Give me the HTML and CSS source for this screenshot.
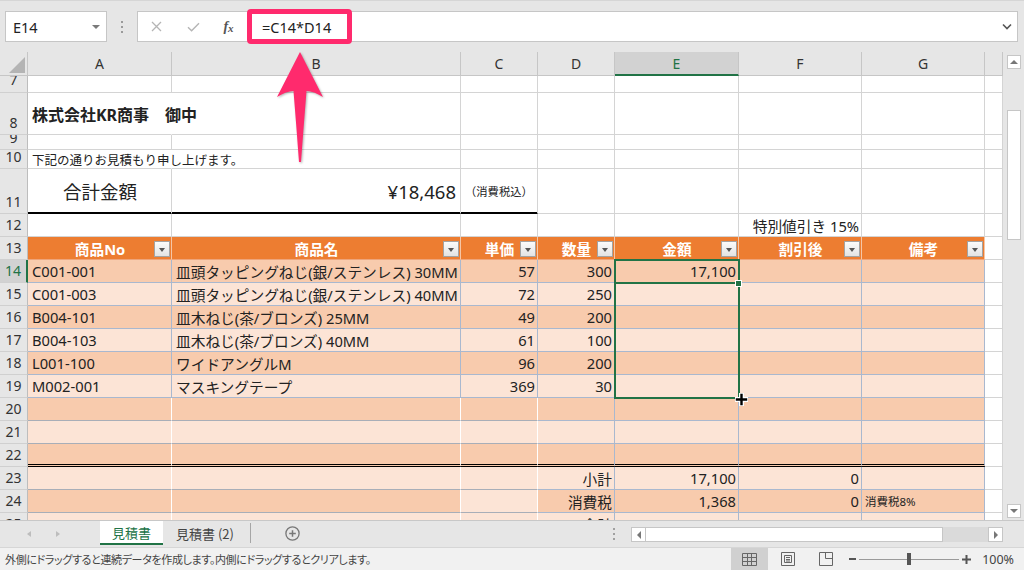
FILE: index.html
```html
<!DOCTYPE html>
<html lang="ja">
<head>
<meta charset="utf-8">
<title>見積書 - Excel</title>
<link rel="stylesheet" href="styles.css">
</head>
<body>
<div class="fbar">
  <div class="namebox"><span>E14</span><i class="tri"></i></div>
  <div class="vdots"><i></i><i></i><i></i></div>
  <div class="fbox">
    <span class="fbtn"><svg width="11" height="11" viewBox="0 0 11 11"><path d="M1 1L10 10M10 1L1 10" stroke="#b5b5b5" stroke-width="1.3" fill="none"/></svg></span>
    <span class="fbtn"><svg width="13" height="10" viewBox="0 0 13 10"><path d="M1 5.2L4.6 8.8L12 1.2" stroke="#b5b5b5" stroke-width="1.4" fill="none"/></svg></span>
    <span class="fbtn fx">f<span>x</span></span>
    <span class="ftext">=C14*D14</span>
    <span class="fchev"><svg width="10" height="7" viewBox="0 0 10 7"><path d="M1 1.5L5 5.5L9 1.5" stroke="#555" stroke-width="1.6" fill="none"/></svg></span>
  </div>
</div>

<div class="main">
  <div class="grid">
    <div class="row colhead">
      <div class="corner"><svg width="28" height="24" viewBox="0 0 28 24"><path d="M25 5V21H9Z" fill="#b4b4b4"/></svg></div>
      <div class="ch">A</div><div class="ch">B</div><div class="ch">C</div><div class="ch">D</div>
      <div class="ch act">E</div><div class="ch">F</div><div class="ch">G</div><div class="ch"></div>
    </div>

    <div class="row w h17 r7">
      <div class="rh"><span>7</span></div>
      <div class="c"></div><div class="c"></div><div class="c"></div><div class="c"></div><div class="c"></div><div class="c"></div><div class="c"></div><div class="c"></div>
    </div>
    <div class="row w h42">
      <div class="rh"><span>8</span></div>
      <div class="c ov title">株式会社KR商事　御中</div><div class="c"></div><div class="c"></div><div class="c"></div><div class="c"></div><div class="c"></div><div class="c"></div><div class="c"></div>
    </div>
    <div class="row w h15">
      <div class="rh"><span>9</span></div>
      <div class="c"></div><div class="c"></div><div class="c"></div><div class="c"></div><div class="c"></div><div class="c"></div><div class="c"></div><div class="c"></div>
    </div>
    <div class="row w h19">
      <div class="rh"><span>10</span></div>
      <div class="c ov note">下記の通りお見積もり申し上げます。</div><div class="c"></div><div class="c"></div><div class="c"></div><div class="c"></div><div class="c"></div><div class="c"></div><div class="c"></div>
    </div>
    <div class="row w h45">
      <div class="rh"><span>11</span></div>
      <div class="c bk ctr big">合計金額</div>
      <div class="c bk r big">¥18,468</div>
      <div class="c bk tiny">（消費税込）</div>
      <div class="c"></div><div class="c"></div><div class="c"></div><div class="c"></div><div class="c"></div>
    </div>
    <div class="row w">
      <div class="rh"><span>12</span></div>
      <div class="c"></div><div class="c"></div><div class="c"></div><div class="c"></div><div class="c"></div>
      <div class="c r">特別値引き 15%</div><div class="c"></div><div class="c"></div>
    </div>

    <div class="row hd">
      <div class="rh"><span>13</span></div>
      <div class="c">商品No<i class="dd"></i></div>
      <div class="c">商品名<i class="dd"></i></div>
      <div class="c">単価<i class="dd"></i></div>
      <div class="c">数量<i class="dd"></i></div>
      <div class="c">金額<i class="dd"></i></div>
      <div class="c">割引後<i class="dd"></i></div>
      <div class="c">備考<i class="dd"></i></div>
      <div class="c x"></div>
    </div>

    <div class="row d">
      <div class="rh act"><span>14</span></div>
      <div class="c">C001-001</div><div class="c b">皿頭タッピングねじ(銀/ステンレス) 30MM</div>
      <div class="c r">57</div><div class="c r">300</div><div class="c r">17,100</div><div class="c"></div><div class="c"></div><div class="c x"></div>
    </div>
    <div class="row l">
      <div class="rh"><span>15</span></div>
      <div class="c">C001-003</div><div class="c b">皿頭タッピングねじ(銀/ステンレス) 40MM</div>
      <div class="c r">72</div><div class="c r">250</div><div class="c r"></div><div class="c"></div><div class="c"></div><div class="c x"></div>
    </div>
    <div class="row d">
      <div class="rh"><span>16</span></div>
      <div class="c">B004-101</div><div class="c b">皿木ねじ(茶/ブロンズ) 25MM</div>
      <div class="c r">49</div><div class="c r">200</div><div class="c r"></div><div class="c"></div><div class="c"></div><div class="c x"></div>
    </div>
    <div class="row l">
      <div class="rh"><span>17</span></div>
      <div class="c">B004-103</div><div class="c b">皿木ねじ(茶/ブロンズ) 40MM</div>
      <div class="c r">61</div><div class="c r">100</div><div class="c r"></div><div class="c"></div><div class="c"></div><div class="c x"></div>
    </div>
    <div class="row d">
      <div class="rh"><span>18</span></div>
      <div class="c">L001-100</div><div class="c b">ワイドアングルM</div>
      <div class="c r">96</div><div class="c r">200</div><div class="c r"></div><div class="c"></div><div class="c"></div><div class="c x"></div>
    </div>
    <div class="row l">
      <div class="rh"><span>19</span></div>
      <div class="c">M002-001</div><div class="c b">マスキングテープ</div>
      <div class="c r">369</div><div class="c r">30</div><div class="c r"></div><div class="c"></div><div class="c"></div><div class="c x"></div>
    </div>
    <div class="row d">
      <div class="rh"><span>20</span></div>
      <div class="c wr"></div><div class="c wr"></div><div class="c wr"></div><div class="c"></div><div class="c"></div><div class="c"></div><div class="c"></div><div class="c x"></div>
    </div>
    <div class="row l">
      <div class="rh"><span>21</span></div>
      <div class="c wr"></div><div class="c wr"></div><div class="c wr"></div><div class="c"></div><div class="c"></div><div class="c"></div><div class="c"></div><div class="c x"></div>
    </div>
    <div class="row d">
      <div class="rh"><span>22</span></div>
      <div class="c wr dbl"></div><div class="c wr dbl"></div><div class="c wr dbl"></div><div class="c dbl"></div><div class="c dbl"></div><div class="c dbl"></div><div class="c dbl"></div><div class="c x"></div>
    </div>
    <div class="row l">
      <div class="rh"><span>23</span></div>
      <div class="c wr"></div><div class="c wr"></div><div class="c wr"></div>
      <div class="c r">小計</div><div class="c r">17,100</div><div class="c r">0</div><div class="c"></div><div class="c x"></div>
    </div>
    <div class="row d">
      <div class="rh"><span>24</span></div>
      <div class="c wr"></div><div class="c wr"></div><div class="c wr lite"></div>
      <div class="c r">消費税</div><div class="c r">1,368</div><div class="c r">0</div><div class="c small">消費税8%</div><div class="c x"></div>
    </div>
    <div class="row l">
      <div class="rh"><span>25</span></div>
      <div class="c wr"></div><div class="c wr"></div><div class="c wr"></div>
      <div class="c r">合計</div><div class="c r">18,468</div><div class="c r">0</div><div class="c"></div><div class="c x"></div>
    </div>

    <div class="selbox"></div>
    <div class="actline"></div>
    <div class="fillhandle"></div>
    <svg class="cursor" width="17" height="17" viewBox="0 0 17 17"><path d="M8.5 2V15M2 8.5H15" stroke="#fff" stroke-width="5"/><path d="M8.5 2.8V14.2M2.8 8.5H14.2" stroke="#000" stroke-width="2.4"/></svg>
  </div>

  <div class="vscroll">
    <div class="sbtn"><i class="tri-up"></i></div>
    <div class="vthumb"></div>
    <div class="vfill"></div>
    <div class="sbtn"><i class="tri-down"></i></div>
  </div>
</div>

<div class="tabbar">
  <div class="tabnav"><i class="nl"></i><i class="nr"></i></div>
  <div class="tab active">見積書</div>
  <div class="tab">見積書 (2)</div>
  <div class="tsep"></div>
  <div class="tadd"><svg width="15" height="15" viewBox="0 0 15 15"><circle cx="7.5" cy="7.5" r="6.6" fill="none" stroke="#777" stroke-width="1.3"/><path d="M7.5 4.2V10.8M4.2 7.5H10.8" stroke="#777" stroke-width="1.5"/></svg></div>
  <div class="tspacer"></div>
  <div class="hdots"><i></i><i></i><i></i></div>
  <div class="hscroll">
    <div class="hbtn"><i class="tri-l"></i></div>
    <div class="hthumb"></div>
    <div class="htrack"></div>
    <div class="hbtn"><i class="tri-r"></i></div>
  </div>
  <div class="tright"></div>
</div>

<div class="status">
  <div class="stext">外側にドラッグすると連続データを作成します。内側にドラッグするとクリアします。</div>
  <div class="sright">
    <div class="vb on"><svg width="15" height="13" viewBox="0 0 15 13"><path d="M.5.5h14v12H.5zM5.5.5v12M9.5.5v12M.5 4.5h14M.5 8.5h14" fill="none" stroke="#666"/></svg></div>
    <div class="vb"><svg width="14" height="14" viewBox="0 0 14 14"><path d="M.5.5h13v13H.5zM3.5 3.5h7v7h-7zM5 5.5h4M5 7.5h4M5 9h4" fill="none" stroke="#666"/></svg></div>
    <div class="vb"><svg width="14" height="14" viewBox="0 0 14 14"><path d="M.5.5h13v13H.5zM6.5.5v6h7" fill="none" stroke="#666"/></svg></div>
    <div class="zminus"></div>
    <div class="slider"><i></i></div>
    <div class="zplus"><svg width="9" height="9" viewBox="0 0 9 9"><path d="M4.5 0V9M0 4.5H9" stroke="#555" stroke-width="2"/></svg></div>
    <div class="zpct">100%</div>
  </div>
</div>

<div class="pinkbox"></div>
<svg class="arrow" width="60" height="122" viewBox="270 46 60 122"><path d="M300 52L323 97Q313.5 91 306.5 91Q303.5 128 301 162L299 162Q296.5 128 293.5 91Q286.5 91 277 97Z" fill="#ff2a6d"/></svg>
</body>
</html>
```

FILE: styles.css
```css
* { box-sizing: border-box; margin: 0; padding: 0; }
html, body { width: 1024px; height: 570px; overflow: hidden; }
body {
  position: relative;
  background: #fff;
  color: #222;
  font-family: "Noto Sans", "Noto Sans CJK JP", sans-serif;
  font-size: 14.7px;
}
i { display: block; font-style: normal; }

/* ---------- formula bar ---------- */
.fbar {
  height: 52px;
  background: #e6e6e6;
  border-top: 1px solid #d6d6d6;
  display: flex;
  align-items: flex-start;
  padding: 10px 6px 0 5px;
}
.namebox {
  width: 102px; height: 31px;
  background: #fff; border: 1px solid #c6c6c6;
  display: flex; align-items: center; justify-content: space-between;
  padding: 0 6px 0 7px;
  font-size: 14.5px; color: #222;
}
.tri { width: 0; height: 0; border-left: 4px solid transparent; border-right: 4px solid transparent; border-top: 4px solid #7a7a7a; }
.vdots { width: 30px; height: 31px; display: flex; flex-direction: column; align-items: center; justify-content: center; gap: 3px; }
.vdots i { width: 2px; height: 2px; background: #9a9a9a; }
.fbox {
  flex: 1; height: 31px;
  background: #fff; border: 1px solid #c6c6c6;
  display: flex; align-items: center;
}
.fbtn { height: 29px; display: flex; align-items: center; justify-content: center; }
.fbtn:nth-child(1) { width: 37px; }
.fbtn:nth-child(2) { width: 37px; }
.fx { width: 33px; font-family: "Liberation Serif", serif; font-style: italic; font-weight: bold; font-size: 14px; color: #555; }
.fx span { font-size: 11px; margin-top: 3px; }
.ftext { padding-left: 17px; font-size: 14.5px; color: #222; }
.fchev { margin-left: auto; padding-right: 5px; display: flex; }

/* ---------- grid ---------- */
.main { height: 468px; display: flex; overflow: hidden; }
.grid { position: relative; width: 1003px; height: 468px; overflow: hidden; }
.row {
  display: grid;
  grid-template-columns: 28px 144px 289px 77px 77px 124px 123px 123px 18px;
  grid-template-rows: 100%;
  height: 23px;
}
.row.colhead { height: 24px; }
.h17 { height: 17px; } .h42 { height: 42px; } .h15 { height: 15px; } .h19 { height: 19px; } .h45 { height: 45px; }

.corner, .ch {
  background: #e6e6e6;
  border-right: 1px solid #c6c6c6;
  border-bottom: 1px solid #c6c6c6;
}
.ch { display: flex; align-items: center; justify-content: center; font-size: 14px; color: #333; }
.ch.act { background: #d2d2d2; color: #217346; border-bottom: 2px solid #217346; }

.rh {
  background: #e6e6e6;
  border-right: 1px solid #bdbdbd;
  border-bottom: 1px solid #d0d0d0;
  display: flex; align-items: flex-end; justify-content: center;
  padding-bottom: 4px;
  font-size: 14px; line-height: 14px; color: #333;
  overflow: hidden;
}
.r7 .rh { padding-bottom: 5px; }
.rh.act { background: #d2d2d2; color: #217346; border-right: 2px solid #217346; }

.c {
  position: relative;
  min-width: 0;
  display: flex; align-items: center;
  padding: 0 3px 0 4px;
  border-right: 1px solid #d4d4d4;
  border-bottom: 1px solid #d4d4d4;
  white-space: nowrap;
  overflow: hidden;
}
.c.ov { overflow: visible; border-right-color: transparent; z-index: 1; }
.c.r { justify-content: flex-end; padding-right: 2px; }
.c.ctr { justify-content: center; }
.c.b { padding-left: 4px; }
.title { font-weight: bold; font-size: 16px; }
.note { font-size: 12.5px; font-family: "Noto Sans CJK JP", sans-serif; }
.big { font-size: 18.5px; }
.big.r { padding-right: 4px; }
.tiny { font-size: 11.3px; padding-left: 4px; font-family: "Noto Sans CJK JP", sans-serif; }
.small { font-size: 11.5px; padding-left: 3px; }

/* table */
.hd .c {
  background: #ed7d31; color: #fff; font-weight: bold;
  justify-content: center;
  border-right-color: #f6c6a6; border-bottom-color: #eea47a;
}
.dd {
  position: absolute; right: 1px; top: 4px;
  width: 16px; height: 16px;
  background: linear-gradient(#fbfbfb, #e3e3e3);
  border: 1px solid #a3a3a3;
}
.dd::after {
  content: ""; position: absolute; left: 3.5px; top: 5.5px;
  border-left: 3.5px solid transparent; border-right: 3.5px solid transparent; border-top: 4px solid #555;
}
.d .c { background: #f8cbad; border-color: #a9b8cf; }
.l .c { background: #fce4d6; border-color: #a9b8cf; }
.d .c.wr, .l .c.wr { border-right-color: #fff; border-bottom-color: #a8aeb8; }
.d .c.lite { background: #fce4d6; }
.row .c.x { background: #fff; border-color: #d4d4d4; }

/* heavy rules */
.row .c.bk { border-bottom: 1px solid #000; box-shadow: inset 0 -1px 0 #000; }
.row .c.dbl { border-bottom: 3px double #000 !important; }

/* selection overlay */
.selbox {
  position: absolute; left: 614px; top: 207px;
  width: 126px; height: 140px;
  border: 2px solid #217346;
}
.actline { position: absolute; left: 614px; top: 230px; width: 124px; height: 2px; background: #217346; }
.fillhandle {
  position: absolute; left: 735px; top: 228px;
  width: 7px; height: 7px; background: #217346; border: 1px solid #fff;
}
.cursor { position: absolute; left: 733px; top: 339px; }

/* vertical scrollbar */
.vscroll {
  width: 21px; height: 468px;
  background: #e6e6e6;
  display: flex; flex-direction: column; align-items: center;
  padding: 3px 0 2px 1px;
}
.sbtn {
  width: 14px; height: 14px; flex: none;
  background: #fff; border: 1px solid #c6c6c6;
  display: flex; align-items: center; justify-content: center;
}
.tri-up { border-left: 4px solid transparent; border-right: 4px solid transparent; border-bottom: 4px solid #777; }
.tri-down { border-left: 4px solid transparent; border-right: 4px solid transparent; border-top: 4px solid #777; }
.vthumb { width: 14px; height: 130px; margin-top: 41px; background: #fff; border: 1px solid #c6c6c6; flex: none; }
.vfill { flex: 1; }

/* tab bar */
.tabbar {
  height: 27px;
  background: #e6e6e6;
  border-top: 1px solid #c8c8c8;
  display: flex; align-items: flex-start;
  font-family: "Noto Sans CJK JP", sans-serif;
  font-size: 13px;
}
.tabnav { width: 100px; height: 25px; display: flex; align-items: center; }
.nl { margin-left: 27px; border-top: 3.5px solid transparent; border-bottom: 3.5px solid transparent; border-right: 4px solid #bdbdbd; }
.nr { margin-left: 25px; border-top: 3.5px solid transparent; border-bottom: 3.5px solid transparent; border-left: 4px solid #bdbdbd; }
.tab { width: 87px; height: 24px; padding-left: 13px; display: flex; align-items: center; color: #444; }
.tab.active {
  width: 63px; height: 24px; padding-left: 0; justify-content: center;
  background: #fff; color: #217346;
  border-bottom: 2px solid #217346;
}
.tsep { width: 1px; height: 20px; margin-top: 2px; background: #a6a6a6; }
.tadd { margin-left: 34px; margin-top: 5px; display: flex; }
.tspacer { flex: 1; }
.hdots { width: 31px; height: 25px; display: flex; flex-direction: column; align-items: center; justify-content: center; gap: 3px; padding-right: 3px; }
.hdots i { width: 2px; height: 2px; background: #a0a0a0; }
.hscroll { width: 372px; height: 15px; margin-top: 6px; display: flex; }
.hbtn {
  width: 15px; height: 15px; flex: none;
  background: #fff; border: 1px solid #c6c6c6;
  display: flex; align-items: center; justify-content: center;
}
.tri-l { border-top: 4px solid transparent; border-bottom: 4px solid transparent; border-right: 4px solid #777; }
.tri-r { border-top: 4px solid transparent; border-bottom: 4px solid transparent; border-left: 4px solid #777; }
.hthumb { width: 297px; height: 15px; background: #fff; border: 1px solid #c6c6c6; border-left: none; }
.htrack { flex: 1; background: #dadada; }
.tright { width: 21px; }

/* status bar */
.status {
  height: 23px;
  background: #f1f1f1;
  border-top: 1px solid #d6d6d6;
  display: flex; align-items: stretch;
}
.stext {
  padding-left: 5px;
  display: flex; align-items: center;
  font-family: "Noto Sans CJK JP", sans-serif;
  font-size: 11px; color: #444;
  letter-spacing: -0.35px;
  font-feature-settings: "palt";
}
.sright { margin-left: auto; display: flex; align-items: center; padding-right: 10px; }
.vb { width: 38px; height: 22px; display: flex; align-items: center; justify-content: center; }
.vb.on { width: 37px; background: #d0d0d0; margin-right: 1px; }
.zminus { width: 7px; height: 2px; background: #555; margin-left: 4px; }
.slider { position: relative; width: 100px; height: 1px; background: #9a9a9a; margin-left: 3px; }
.slider i { position: absolute; left: 48px; top: -6px; width: 4px; height: 12px; background: #555; }
.zplus { margin-left: 3px; display: flex; }
.zpct { margin-left: 11px; font-size: 12.5px; color: #444; }

/* annotations */
.pinkbox {
  position: absolute; left: 247px; top: 9px;
  width: 105px; height: 35px;
  border: 5px solid #ff2a6d; border-radius: 4px;
}
.arrow {
  position: absolute; left: 270px; top: 46px;
  filter: drop-shadow(1px 1px 1.2px rgba(0,0,0,0.3));
}
```
